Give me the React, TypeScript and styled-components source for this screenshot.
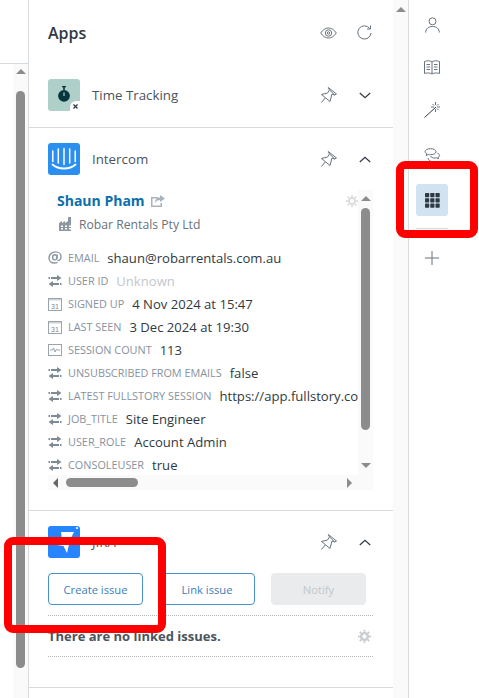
import React from "react";
import styled, { createGlobalStyle } from "styled-components";

const Global = createGlobalStyle`
  html, body { margin: 0; padding: 0; background: #fff; overflow: hidden; }
  * { box-sizing: border-box; }
  body { font-family: "Open Sans", "Noto Sans", sans-serif; color: #2f3941; }
`;

const Page = styled.div`
  position: relative;
  display: flex;
  width: 479px;
  height: 698px;
  overflow: hidden;
`;

const LeftPane = styled.div`
  width: 29px;
  flex: none;
  display: flex;
  flex-direction: column;
  border-right: 1px solid #d8dcde;
`;
const LeftTop = styled.div`
  height: 64px;
  flex: none;
  border-bottom: 1px solid #d8dcde;
`;
const Track = styled.div<{ $pad?: number }>`
  width: 15px;
  flex: none;
  display: flex;
  flex-direction: column;
  align-items: center;
  background: #fafafa;
  padding-top: ${(p) => p.$pad ?? 5}px;
`;
const LeftTrack = styled(Track)`
  margin-left: 13px;
  flex: 1;
  min-height: 0;
`;
const ArrowUp = styled.div`
  width: 0;
  height: 0;
  flex: none;
  border-left: 5px solid transparent;
  border-right: 5px solid transparent;
  border-bottom: 5px solid #8c8c8c;
`;
const ArrowDown = styled.div<{ $top: number }>`
  width: 0;
  height: 0;
  flex: none;
  margin-top: ${(p) => p.$top}px;
  border-left: 5px solid transparent;
  border-right: 5px solid transparent;
  border-top: 5px solid #8c8c8c;
`;
const Thumb = styled.div<{ $h: number; $top: number }>`
  width: 9px;
  height: ${(p) => p.$h}px;
  margin-top: ${(p) => p.$top}px;
  flex: none;
  background: #8c8c8c;
  border-radius: 5px;
`;

const Main = styled.main`
  width: 364px;
  flex: none;
  display: flex;
  flex-direction: column;
`;
const Header = styled.header`
  height: 64px;
  flex: none;
  display: flex;
  align-items: center;
  padding: 2px 21px 0 19px;
  gap: 20px;
`;
const Title = styled.h1`
  margin: 0 auto 0 0;
  font-size: 16px;
  font-weight: 600;
  color: #2f3941;
`;
const Section = styled.section<{ $h: number }>`
  height: ${(p) => p.$h}px;
  flex: none;
  padding: 15px 20px 0 19px;
  border-bottom: 1px solid #d8dcde;
`;
const AppHead = styled.div`
  display: flex;
  align-items: center;
  height: 32px;
  padding-right: 2px;
`;
const AppName = styled.span`
  margin-left: 12px;
  font-size: 13.3px;
  color: #49545c;
  flex: 1;
`;
const HeadIcons = styled.div`
  display: flex;
  align-items: center;
  gap: 22px;
`;
const Tile = styled.div<{ $bg: string }>`
  position: relative;
  width: 32px;
  height: 32px;
  flex: none;
  border-radius: 3px;
  background: ${(p) => p.$bg};
  display: flex;
  align-items: center;
  justify-content: center;
  overflow: hidden;
`;
const WatchSlot = styled.div`
  display: flex;
  margin: 0 0 2px 0;
`;
const Corner = styled.div`
  position: absolute;
  right: 0;
  bottom: 0;
  width: 10px;
  height: 10px;
  background: #fff;
  border-top-left-radius: 6px;
  display: flex;
  align-items: center;
  justify-content: center;
`;

const Frame = styled.div`
  display: grid;
  grid-template-columns: 310px 15px;
  grid-template-rows: 285px 15px;
  margin-top: 15px;
  height: 300px;
`;
const Content = styled.div`
  overflow: hidden;
  min-width: 0;
  position: relative;
`;
const GearSlot = styled.div`
  position: absolute;
  right: 0;
  top: 0;
`;
const Contact = styled.div`
  padding: 0 0 0 9px;
  height: 56px;
`;
const NameLine = styled.div`
  display: flex;
  align-items: center;
  gap: 6px;
  height: 22px;
`;
const Name = styled.a`
  font-size: 14px;
  font-weight: 700;
  color: #0a6fad;
  line-height: 20px;
`;
const Company = styled.div`
  display: flex;
  align-items: center;
  gap: 6px;
  font-size: 12.2px;
  color: #68737d;
  margin: 2px 0 0 2px;
  height: 20px;
  white-space: nowrap;
`;
const Row = styled.div`
  height: 23px;
  display: flex;
  align-items: center;
  white-space: nowrap;
`;
const RowIcon = styled.span`
  width: 20px;
  flex: none;
  display: flex;
  align-items: center;
`;
const Label = styled.span`
  font-size: 10.85px;
  color: #87929d;
  text-transform: uppercase;
  margin-right: 8px;
`;
const Value = styled.span<{ $muted?: boolean }>`
  font-size: 13.1px;
  color: ${(p) => (p.$muted ? "#c2c8cc" : "#2f3941")};
`;
const VBar = styled(Track)`
  height: 285px;
`;
const HBar = styled.div`
  height: 15px;
  background: #fafafa;
  display: flex;
  align-items: center;
  padding-left: 5px;
`;
const ArrowLeft = styled.div`
  width: 0;
  height: 0;
  flex: none;
  border-top: 5px solid transparent;
  border-bottom: 5px solid transparent;
  border-right: 5px solid #666;
`;
const ArrowRight = styled.div`
  width: 0;
  height: 0;
  flex: none;
  border-top: 5px solid transparent;
  border-bottom: 5px solid transparent;
  border-left: 5px solid #8c8c8c;
  margin-left: 209px;
`;
const HThumb = styled.div`
  width: 72px;
  height: 9px;
  margin-left: 8px;
  flex: none;
  background: #8c8c8c;
  border-radius: 5px;
`;
const FrameCorner = styled.div`
  background: #fafafa;
`;

const Buttons = styled.div`
  display: flex;
  margin-top: 15px;
`;
const Btn = styled.button<{ $w: number; $left: number }>`
  width: ${(p) => p.$w}px;
  height: 32px;
  margin-left: ${(p) => p.$left}px;
  padding: 0;
  border: 1px solid #4a90c8;
  border-radius: 4px;
  background: #fff;
  color: #3a7db8;
  font: 400 11.2px "Open Sans", "Noto Sans", sans-serif;
`;
const Disabled = styled(Btn)`
  border-color: #e9ebed;
  background: #e9ebed;
  color: #c2c8cc;
`;
const Linked = styled.div`
  margin-top: 10px;
  height: 42px;
  border-top: 1px dotted #b5b5b5;
  border-bottom: 1px dotted #b5b5b5;
  display: flex;
  align-items: center;
  justify-content: space-between;
  font-size: 13px;
  font-weight: 700;
  color: #49545c;
  padding-right: 2px;
`;

const MainTrack = styled(Track)`
  height: 698px;
`;

const Rail = styled.nav`
  width: 71px;
  flex: none;
  border-left: 1px solid #d8dcde;
  display: flex;
  flex-direction: column;
  align-items: center;
  padding: 3px 24px 0 0;
`;
const RailIcon = styled.div<{ $h: number }>`
  width: 32px;
  height: ${(p) => p.$h}px;
  flex: none;
  display: flex;
  align-items: center;
  justify-content: center;
`;
const ActiveTile = styled.div`
  width: 32px;
  height: 32px;
  margin-top: 4px;
  flex: none;
  border-radius: 3px;
  background: #d1e2f0;
  display: flex;
  align-items: center;
  justify-content: center;
`;
const RailRule = styled.div`
  width: 32px;
  height: 1px;
  margin-top: 12px;
  flex: none;
  background: #d8dcde;
`;

const RedBox = styled.div<{ $l: number; $t: number; $w: number; $h: number }>`
  position: absolute;
  left: ${(p) => p.$l}px;
  top: ${(p) => p.$t}px;
  width: ${(p) => p.$w}px;
  height: ${(p) => p.$h}px;
  border: 8px solid #ff0000;
  border-radius: 9px;
`;

const stroke = { fill: "none", stroke: "#68737d", strokeWidth: 1 } as const;

const Eye = () => (
  <svg width="17" height="12" viewBox="0 0 17 12" {...stroke}>
    <path d="M.7 6C3 2.600 5.600 1 8.500 1s5.500 1.600 7.800 5c-2.300 3.400-4.900 5-7.800 5S3 9.400.700 6z" />
    <circle cx="8.500" cy="6" r="3.200" />
    <circle cx="8.500" cy="6" r="1.200" />
  </svg>
);
const Refresh = () => (
  <svg width="15" height="16" viewBox="0 0 15 16" {...stroke}>
    <path d="M12.800 3.600A6.600 6.600 0 1 0 14 8" />
    <path d="M13.500.500v3.500H10" />
  </svg>
);
const Pin = () => (
  <svg width="17" height="16" viewBox="0 0 17 16" {...stroke}>
    <path d="M8.300.500L16.500 7l-1.800 1-2.700-1-2 7.500-8.500-7 6-1.500 2-3z" />
    <path d="M9.800 3.200l4.900 4.800" />
    <path d="M5.200 11L1.500 15.500" />
  </svg>
);
const Chevron = ({ up }: { up?: boolean }) => (
  <svg width="12" height="7" viewBox="0 0 12 7" fill="none" stroke="#2f3941" strokeWidth="1.200">
    <path d={up ? "M.8 6L6 1.200 11.200 6" : "M.8 1L6 5.800 11.200 1"} />
  </svg>
);
const Gear = ({ c, s }: { c: string; s: number }) => (
  <svg width={s} height={s} viewBox="0 0 14 14" fill="none" stroke={c}>
    <circle cx="7" cy="7" r="3.600" strokeWidth="2.600" />
    <path strokeWidth="2.200" d="M7 0v2M7 12v2M0 7h2M12 7h2M2 2l1.400 1.400M10.600 10.600L12 12M12 2l-1.400 1.400M3.400 10.600L2 12" />
  </svg>
);
const Sync = () => (
  <svg width="14" height="12" viewBox="0 0 14 12" fill="#7e8a94">
    <path d="M9 0l4.500 3L9 6V4H3V2h6zM5 6v2h6v2H5v2L.5 9zM.5 2h1.500v2H.5zM12 8h1.500v2H12z" />
  </svg>
);
const Calendar = () => (
  <svg width="14" height="14" viewBox="0 0 14 14" fill="none" stroke="#9aa4ad">
    <rect x=".5" y="1.500" width="13" height="12" />
    <path strokeWidth="1.800" strokeDasharray="1 1" d="M1.500 2.500h11" />
    <text x="7" y="11.500" textAnchor="middle" fontSize="7" fontFamily="Liberation Sans" stroke="none" fill="#7e8a94">31</text>
  </svg>
);
const Chart = () => (
  <svg width="14" height="12" viewBox="0 0 14 12" fill="none" stroke="#9aa4ad">
    <rect x=".5" y=".5" width="13" height="11" />
    <path d="M2 6h2.500l1-2 1.500 4 1.500-3 .8 1H12" />
  </svg>
);
const At = () => (
  <svg width="14" height="13" viewBox="0 0 14 13" fill="none" stroke="#8d98a2" strokeWidth="1.400">
    <path d="M9.500 9.500c1.800.200 3.500-1 3.500-3.800C13 3 10.600.900 7.600.900 4 .900 1 3.500 1 7c0 3 2.300 5 5.300 5 1.300 0 2.300-.200 3.200-.700" />
    <ellipse cx="6.800" cy="6.300" rx="2.200" ry="2.600" />
    <path d="M9.300 3.500L8.700 8" />
  </svg>
);
const Building = () => (
  <svg width="14" height="14" viewBox="0 0 14 14" fill="#8d98a2">
    <path d="M0 14V6l3-2v2l3-2v2l3-2V0h3v14z" />
    <path fill="#fff" d="M2 8.500h2V10H2zM6 8.500h2V10H6zM10 8.500h2V10h-2zM2 11h2v1.500H2zM6 11h2v1.500H6zM10 11h2v1.500h-2z" />
  </svg>
);
const Share = () => (
  <svg width="14" height="12" viewBox="0 0 14 12" fill="#a9b3bb">
    <path d="M0 2h7v1.500H1.500v7h8V8H11v4H0z" />
    <path d="M9 0l5 3.500L9 7V5C6.500 5 5 6 4 8c0-3.500 2-5.500 5-5.500z" />
  </svg>
);
const Watch = () => (
  <svg width="12" height="16" viewBox="0 0 12 16" fill="#07363f">
    <path d="M4 0h4v1.300H6.800V4H5.200V1.300H4z" />
    <circle cx="6" cy="9.800" r="5.900" />
    <path stroke="#afcfc9" strokeWidth="1.200" d="M6 6.500v3.500" />
  </svg>
);
const MiniX = () => (
  <svg width="5" height="5" viewBox="0 0 5 5" stroke="#2f3941" strokeWidth="1.200">
    <path d="M.5.500l4 4M4.500.500l-4 4" />
  </svg>
);
const Smile = () => (
  <svg width="26" height="26" viewBox="0 0 26 26" fill="none" stroke="#fff" strokeWidth="1.500" strokeLinecap="round">
    <path d="M1.800 5v10.500M7.300 3v14M13 2.500v16M18.700 3v14M24.200 5v10.500" />
    <path strokeWidth="1.800" d="M1.500 18.500c3 2.800 7 4 11.500 4s8.500-1.200 11.500-4" />
  </svg>
);
const JiraMark = () => (
  <svg width="32" height="32" viewBox="0 0 32 32" fill="#fff">
    <path d="M13 6h13l-4 8-3 13-3.500-7L9 19l5-5z" />
    <path d="M28 1l2 2M30 1l-2 2" stroke="#fff" strokeWidth=".8" />
  </svg>
);
const Person = () => (
  <svg width="15" height="16" viewBox="0 0 15 16" {...stroke}>
    <circle cx="7.500" cy="4.300" r="3.500" />
    <path d="M.7 15.500c0-3.800 2.800-6 6.800-6s6.800 2.200 6.800 6" />
  </svg>
);
const Book = () => (
  <svg width="16" height="15" viewBox="0 0 16 15" {...stroke}>
    <path d="M.5 1.500C3 .500 6 .500 8 1.800 10 .500 13 .500 15.500 1.500v12C13 12.700 10 12.700 8 14c-2-1.300-5-1.300-7.500-.500zM8 1.800V14" />
    <path d="M2.500 4.500H6M2.500 7H6M2.500 9.500H6M10 4.500h3.500M10 7h3.500M10 9.500h3.500" />
  </svg>
);
const Wand = () => (
  <svg width="16" height="16" viewBox="0 0 16 16" fill="none" stroke="#2f3941">
    <path d="M.5 15.500L12 5" />
    <path stroke="#68737d" d="M11.500 0v3M11.500 7v3M7 5h3M13 5h3M8.500 2l1.500 1.500M13 6.500L14.500 8M14.500 2L13 3.500" />
  </svg>
);
const Chats = () => (
  <svg width="17" height="15" viewBox="0 0 17 15" {...stroke}>
    <path d="M6.500.700c3 0 5.500 1.200 5.500 3 0 1.800-2.500 3-5.500 3-.800 0-1.500 0-2.200-.200L2.300 7.500l.400-2C1.500 5 1 4.400 1 3.700c0-1.800 2.500-3 5.500-3z" />
    <path d="M6.500 8c.600 1.300 2.300 2 4.500 2 .600 0 1.200 0 1.700-.200l1.800 1-.400-1.600c1-.500 1.500-1 1.500-1.700 0-1-.800-1.800-2.200-2.300" />
    <path d="M4 10c.500 2 2 3.500 5 4.200" />
  </svg>
);
const GridDots = () => (
  <svg width="15" height="15" viewBox="0 0 15 15" fill="#2f3941">
    {[0, 5.25, 10.5].flatMap((x) =>
      [0, 5.25, 10.5].map((y) => <rect key={`${x}-${y}`} x={x} y={y} width="4.200" height="4.200" rx=".6" />)
    )}
  </svg>
);
const Plus = () => (
  <svg width="14" height="14" viewBox="0 0 14 14" stroke="#68737d">
    <path d="M7 0v14M0 7h14" />
  </svg>
);

const rows: { icon: React.ReactNode; label: string; value: string; muted?: boolean }[] = [
  { icon: <At />, label: "Email", value: "shaun@robarrentals.com.au" },
  { icon: <Sync />, label: "User ID", value: "Unknown", muted: true },
  { icon: <Calendar />, label: "Signed up", value: "4 Nov 2024 at 15:47" },
  { icon: <Calendar />, label: "Last seen", value: "3 Dec 2024 at 19:30" },
  { icon: <Chart />, label: "Session count", value: "113" },
  { icon: <Sync />, label: "Unsubscribed from emails", value: "false" },
  { icon: <Sync />, label: "Latest FullStory session", value: "https://app.fullstory.com/ui/session" },
  { icon: <Sync />, label: "job_title", value: "Site Engineer" },
  { icon: <Sync />, label: "user_role", value: "Account Admin" },
  { icon: <Sync />, label: "consoleuser", value: "true" },
];

export default function App() {
  return (
    <Page>
      <Global />
      <LeftPane>
        <LeftTop />
        <LeftTrack>
          <ArrowUp />
          <Thumb $h={577} $top={17} />
        </LeftTrack>
      </LeftPane>
      <Main>
        <Header>
          <Title>Apps</Title>
          <Eye />
          <Refresh />
        </Header>
        <Section $h={64}>
          <AppHead>
            <Tile $bg="#afcfc9">
              <WatchSlot>
                <Watch />
              </WatchSlot>
              <Corner>
                <MiniX />
              </Corner>
            </Tile>
            <AppName>Time Tracking</AppName>
            <HeadIcons>
              <Pin />
              <Chevron />
            </HeadIcons>
          </AppHead>
        </Section>
        <Section $h={383}>
          <AppHead>
            <Tile $bg="#2b8ff0">
              <Smile />
            </Tile>
            <AppName>Intercom</AppName>
            <HeadIcons>
              <Pin />
              <Chevron up />
            </HeadIcons>
          </AppHead>
          <Frame>
            <Content>
              <GearSlot>
                <Gear c="#dcdfe1" s={12} />
              </GearSlot>
              <Contact>
                <NameLine>
                  <Name>Shaun Pham</Name>
                  <Share />
                </NameLine>
                <Company>
                  <Building />
                  Robar Rentals Pty Ltd
                </Company>
              </Contact>
              {rows.map((r) => (
                <Row key={r.label}>
                  <RowIcon>{r.icon}</RowIcon>
                  <Label>{r.label}</Label>
                  <Value $muted={r.muted}>{r.value}</Value>
                </Row>
              ))}
            </Content>
            <VBar $pad={6}>
              <ArrowUp />
              <Thumb $h={222} $top={7} />
              <ArrowDown $top={33} />
            </VBar>
            <HBar>
              <ArrowLeft />
              <HThumb />
              <ArrowRight />
            </HBar>
            <FrameCorner />
          </Frame>
        </Section>
        <Section $h={177}>
          <AppHead>
            <Tile $bg="#2684ff">
              <JiraMark />
            </Tile>
            <AppName>JIRA</AppName>
            <HeadIcons>
              <Pin />
              <Chevron up />
            </HeadIcons>
          </AppHead>
          <Buttons>
            <Btn $w={95} $left={0}>Create issue</Btn>
            <Btn $w={96} $left={16}>Link issue</Btn>
            <Disabled $w={95} $left={16}>Notify</Disabled>
          </Buttons>
          <Linked>
            There are no linked issues.
            <Gear c="#c9cdd0" s={13} />
          </Linked>
        </Section>
      </Main>
      <MainTrack $pad={7}>
        <ArrowUp />
      </MainTrack>
      <Rail>
        <RailIcon $h={43}>
          <Person />
        </RailIcon>
        <RailIcon $h={43}>
          <Book />
        </RailIcon>
        <RailIcon $h={42}>
          <Wand />
        </RailIcon>
        <RailIcon $h={49}>
          <Chats />
        </RailIcon>
        <ActiveTile>
          <GridDots />
        </ActiveTile>
        <RailRule />
        <RailIcon $h={57}>
          <Plus />
        </RailIcon>
      </Rail>
      <RedBox $l={396} $t={161} $w={82} $h={77} />
      <RedBox $l={4} $t={537} $w={162} $h={96} />
    </Page>
  );
}
